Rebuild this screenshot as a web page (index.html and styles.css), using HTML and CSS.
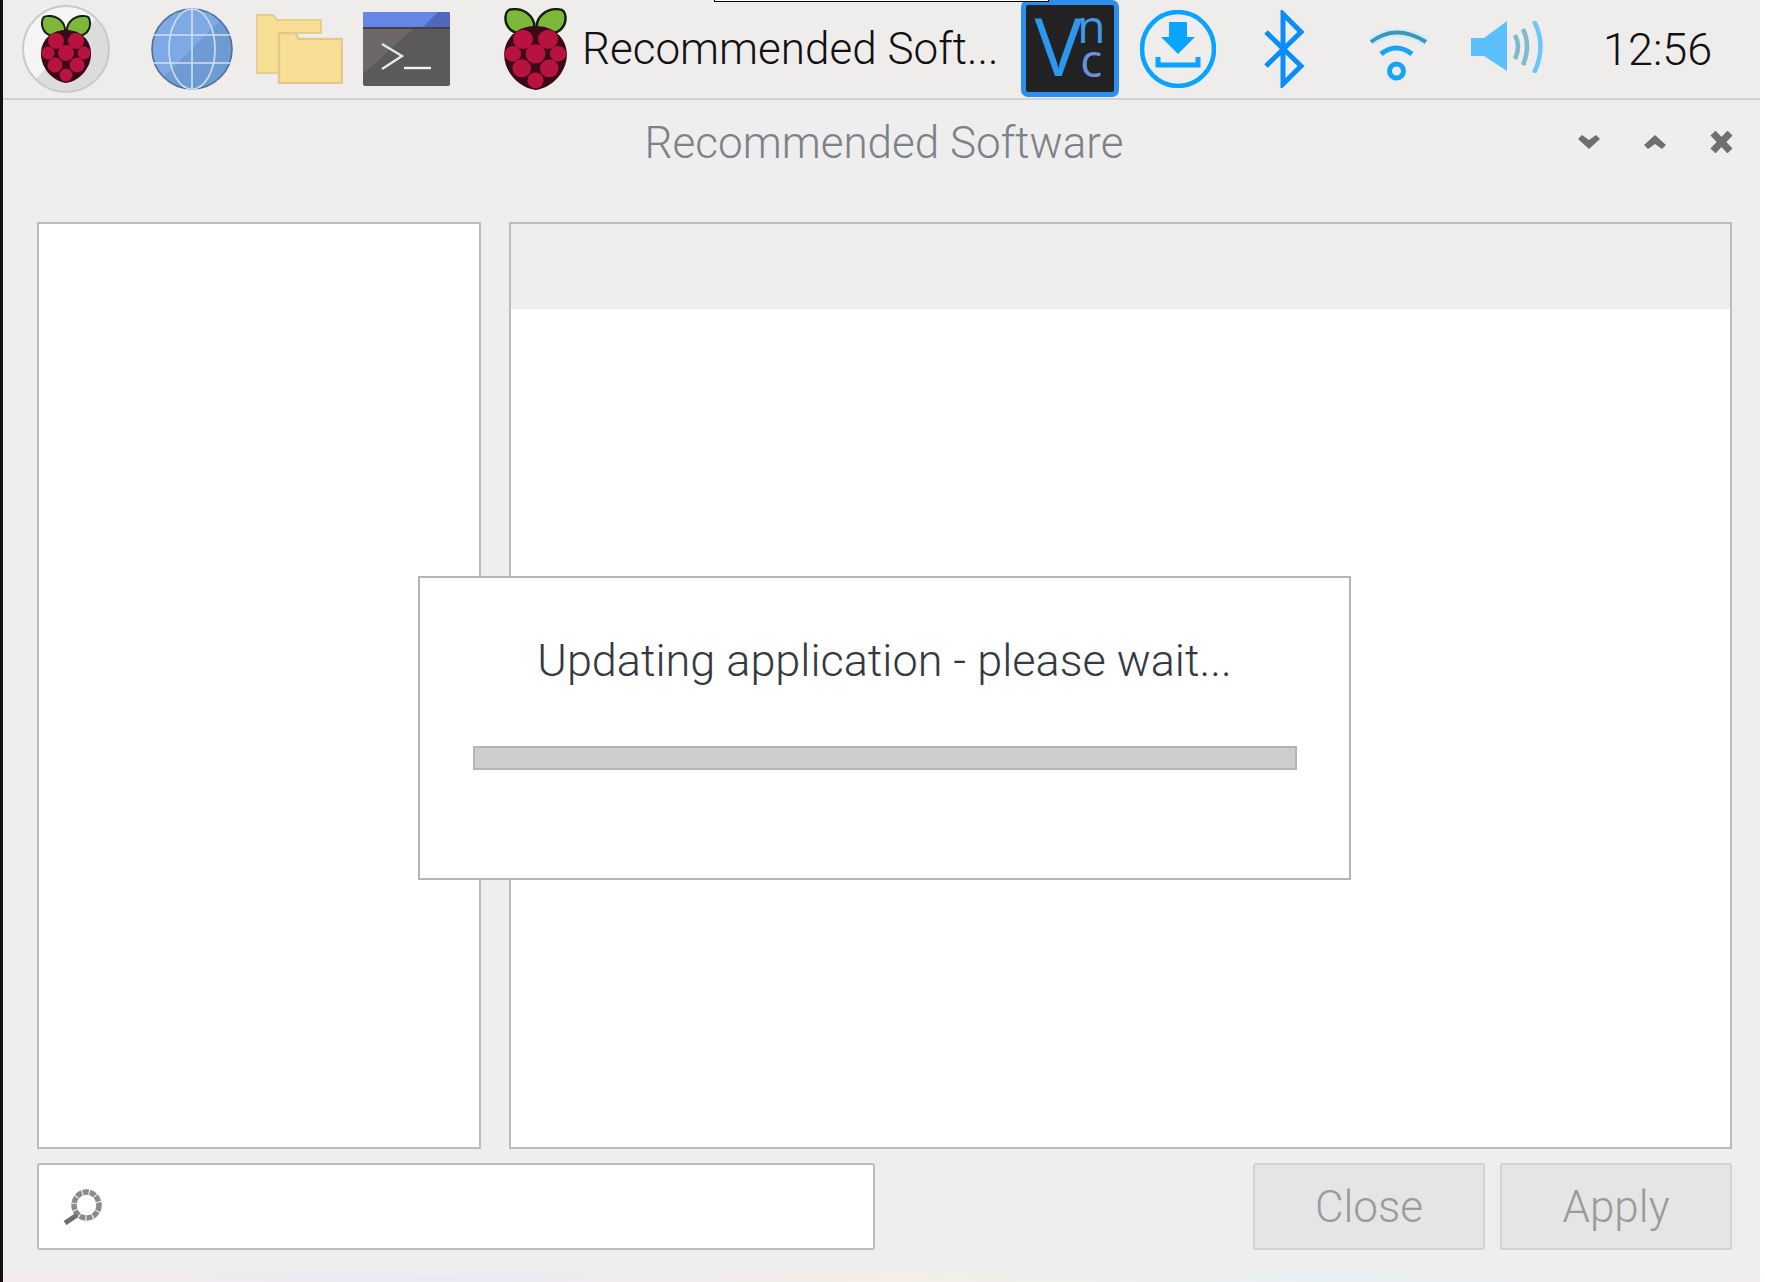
FILE: index.html
```html
<!DOCTYPE html>
<html lang="en">
<head>
  <meta charset="UTF-8">
  <title>Recommended Software</title>
  <link rel="stylesheet" href="styles.css">
</head>
<body>
<div class="screen">
  <div class="tooltip-edge"></div>

  <div class="taskbar">
    <div class="launcher menu-btn">
      <svg class="berry-small" viewBox="0 0 52 68" preserveAspectRatio="none"><use href="#berry"/></svg>
    </div>
    <svg class="launcher globe" viewBox="0 0 82 82">
      <defs>
        <linearGradient id="globeFill" x1="0" y1="0" x2="1" y2="1">
          <stop offset="0.5" stop-color="#7ea9e4"/><stop offset="0.5" stop-color="#6e9bd2"/>
        </linearGradient>
      </defs>
      <ellipse cx="41" cy="41" rx="40" ry="40" fill="url(#globeFill)" stroke="#4f6f97" stroke-width="1.6"/>
      <g fill="none" stroke="#cfe0f5" stroke-width="1.6">
        <path d="M41 1V81M2 27H80M2 55H80"/>
        <ellipse cx="41" cy="41" rx="23" ry="40"/>
      </g>
    </svg>
    <svg class="launcher folders" viewBox="0 0 87 70">
      <path d="M1 1H17L21 6H65V19H23V59H1Z" fill="#f8dd95" stroke="#e5cd90" stroke-width="2"/>
      <path d="M23 19H39L43 25H86V69H23Z" fill="#f8dd95" stroke="#e0c98c" stroke-width="2.4"/>
    </svg>
    <svg class="launcher terminal" viewBox="0 0 87 74">
      <rect width="87" height="74" rx="2" fill="#5a5a5a"/>
      <path d="M0 17H50L0 62Z" fill="#6c6868"/>
      <path d="M0 2Q0 0 2 0H85Q87 0 87 2V15H0Z" fill="#6585e8"/>
      <path d="M60 15L75 0H85Q87 0 87 2V15Z" fill="#4f68bd"/>
      <path d="M0 15H87V17H0Z" fill="#444"/>
      <path d="M19 32L39 44L19 57" fill="none" stroke="#e8e8e8" stroke-width="2.4"/>
      <path d="M41 56H68" stroke="#f2f2f2" stroke-width="2.4"/>
    </svg>

    <div class="task">
      <svg class="berry-large" viewBox="0 0 52 68" preserveAspectRatio="none"><use href="#berry"/></svg>
      <span class="task-label">Recommended Soft...</span>
    </div>

    <div class="vnc">
      <span class="vnc-v">V</span>
      <div class="vnc-rest"><span>n</span><span class="vnc-c">c</span></div>
    </div>

    <svg class="tray-download" viewBox="0 0 76 78">
      <ellipse cx="38" cy="39" rx="36" ry="37" fill="none" stroke="#08a4ff" stroke-width="4.5"/>
      <path d="M29 12H47V27H55L38 44L21 27H29Z" fill="#08a4ff"/>
      <path d="M18 47V55H58V47" fill="none" stroke="#08a4ff" stroke-width="5"/>
    </svg>
    <svg class="tray-bluetooth" viewBox="0 0 42 78">
      <path d="M3 22L38 56L20 74V4L38 22L3 56" fill="none" stroke="#0a8cff" stroke-width="5"/>
    </svg>
    <svg class="tray-wifi" viewBox="0 0 67 52">
      <path d="M8 13Q33 -6 63 13" fill="none" stroke="#cdeefc" stroke-width="9"/>
      <path d="M8 13Q33 -6 63 13" fill="none" stroke="#3e95b8" stroke-width="4"/>
      <path d="M18 25Q33 13 49 25" fill="none" stroke="#14a4f8" stroke-width="5"/>
      <circle cx="33.5" cy="42" r="7" fill="none" stroke="#14a4f8" stroke-width="5"/>
    </svg>
    <svg class="tray-volume" viewBox="0 0 73 52">
      <path d="M0 17H13L36 0V50L13 35H0Z" fill="#5cc0ff"/>
      <path d="M44 14Q50 25 44 38M52 8Q60 25 52 44" fill="none" stroke="#7fb9cf" stroke-width="4.5"/>
      <path d="M63 0Q76 25 63 52" fill="none" stroke="#6cc6fb" stroke-width="4.5"/>
    </svg>
    <span class="clock">12:56</span>
  </div>

  <div class="window">
    <div class="titlebar">
      <span class="title">Recommended Software</span>
      <div class="wm-buttons">
        <svg class="wm-chevron" viewBox="0 0 22 14"><polygon points="0,4 4,0 11,5 18,0 22,4 11,14" fill="#6f6f6f"/></svg>
        <svg class="wm-chevron" viewBox="0 0 22 14"><polygon points="0,10 4,14 11,9 18,14 22,10 11,0" fill="#6f6f6f"/></svg>
        <svg class="wm-close" viewBox="0 0 23 22"><path d="M3 2L20 20M20 2L3 20" fill="none" stroke="#6f6f6f" stroke-width="7"/></svg>
      </div>
    </div>

    <div class="panes">
      <div class="pane pane-side"></div>
      <div class="pane pane-main">
        <div class="pane-header"></div>
      </div>
    </div>

    <div class="footer">
      <div class="search">
        <svg class="search-icon" viewBox="0 0 40 36">
          <ellipse cx="23.5" cy="16" rx="12.5" ry="13" fill="none" stroke="#8a8a8a" stroke-width="5.5" stroke-dasharray="6 1"/>
          <path d="M14 26L2 34" stroke="#6d6d6d" stroke-width="5"/>
        </svg>
      </div>
      <div class="buttons">
        <div class="btn">Close</div>
        <div class="btn">Apply</div>
      </div>
    </div>
  </div>

  <div class="bottom-strip"></div>

  <div class="dialog">
    <div class="dialog-text">Updating application - please wait...</div>
    <div class="progress"></div>
  </div>
</div>

<svg class="defs" width="0" height="0">
  <symbol id="berry" viewBox="0 0 52 68" preserveAspectRatio="none">
    <path d="M25 17C26 8 18 0 7 1C1 1 0 12 6 18C12 23 22 22 25 17Z" fill="#7db83a" stroke="#14200b" stroke-width="2"/>
    <path d="M27 17C26 8 34 0 45 1C51 1 52 12 46 18C40 23 30 22 27 17Z" fill="#7db83a" stroke="#14200b" stroke-width="2"/>
    <path d="M26 15C40 15 50 24 51 37C52 52 40 66 26 68C12 66 0 52 1 37C2 24 12 15 26 15Z" fill="#3a0a18"/>
    <g fill="#b8123f">
      <circle cx="16" cy="26" r="8"/><circle cx="36" cy="26" r="8"/>
      <circle cx="26" cy="38" r="8"/><circle cx="8" cy="38" r="6.5"/><circle cx="44" cy="38" r="6.5"/>
      <circle cx="15" cy="50" r="7.5"/><circle cx="37" cy="50" r="7.5"/>
      <circle cx="26" cy="60" r="6.5"/>
    </g>
  </symbol>
</svg>
</body>
</html>
```

FILE: styles.css
```css
html, body {
  margin: 0;
  padding: 0;
  overflow: hidden;
}

body {
  background-color: #fff;
  font-family: Roboto, "Liberation Sans", sans-serif;
}

.defs {
  position: absolute;
}

.screen {
  position: relative;
  width: 1765px;
  height: 1282px;
  box-sizing: border-box;
  border-left: 3px solid #111;
  border-right: 5px solid #fff;
  display: flex;
  flex-direction: column;
  overflow: hidden;
}

/* sliver of a tooltip poking in from above */
.tooltip-edge {
  position: absolute;
  left: 711px;
  top: 0;
  width: 333px;
  height: 1px;
  background-color: #fff;
  border-bottom: 1px solid #000;
  border-left: 1px solid #000;
  border-right: 1px solid #000;
}

/* taskbar */
.taskbar {
  height: 98px;
  flex: none;
  background-color: #efecec;
  border-bottom: 2px solid #d2d2d2;
  display: flex;
  align-items: center;
}

.launcher {
  flex: none;
}

.menu-btn {
  box-sizing: border-box;
  width: 88px;
  height: 88px;
  margin-left: 19px;
  border-radius: 50%;
  border: 2px solid #c9c9c9;
  background: linear-gradient(135deg, #f5f5f5 50%, #dcdcdc 50%);
  display: flex;
  align-items: center;
  justify-content: center;
}

.berry-small {
  width: 52px;
  height: 68px;
}

.globe {
  width: 82px;
  height: 82px;
  margin-left: 41px;
}

.folders {
  width: 87px;
  height: 70px;
  margin-left: 23px;
}

.terminal {
  width: 87px;
  height: 74px;
  margin-left: 20px;
}

.task {
  display: flex;
  align-items: center;
  margin-left: 53px;
  width: 518px;
  flex: none;
}

.berry-large {
  width: 65px;
  height: 82px;
  flex: none;
}

.task-label {
  margin-left: 14px;
  font-size: 44px;
  font-weight: 300;
  color: #111;
  white-space: nowrap;
}

.vnc {
  box-sizing: border-box;
  flex: none;
  width: 98px;
  height: 97px;
  align-self: flex-start;
  background-color: #222222;
  border: 5px solid #2a8fee;
  border-radius: 7px;
  display: flex;
  justify-content: center;
  font-family: "Open Sans", sans-serif;
  color: #2d96ef;
  line-height: 1;
}

.vnc-v {
  font-size: 80px;
  font-weight: 400;
  margin-right: -5px;
}

.vnc-rest {
  display: flex;
  flex-direction: column;
  align-items: center;
  font-size: 46px;
  font-weight: 400;
  line-height: 34px;
  margin-top: 3px;
  color: #3f9bea;
}

.vnc-c {
  color: #6c8fe0;
}

.tray-download {
  width: 76px;
  height: 78px;
  margin-left: 21px;
  flex: none;
}

.tray-bluetooth {
  width: 42px;
  height: 78px;
  margin-left: 47px;
  flex: none;
}

.tray-wifi {
  width: 67px;
  height: 52px;
  margin-left: 58px;
  margin-top: 12px;
  flex: none;
}

.tray-volume {
  width: 73px;
  height: 52px;
  margin-left: 41px;
  margin-top: -4px;
  flex: none;
}

.clock {
  margin-left: 59px;
  font-size: 45px;
  font-weight: 300;
  color: #111;
}

/* app window */
.window {
  flex: 1;
  background-color: #eeeeee;
  display: flex;
  flex-direction: column;
}

.titlebar {
  height: 122px;
  flex: none;
  position: relative;
  display: flex;
  justify-content: center;
  box-sizing: border-box;
  padding-top: 17px;
}

.title {
  font-size: 44px;
  font-weight: 300;
  color: #7d8288;
  line-height: 52px;
  margin-left: 5px;
}

.wm-buttons {
  position: absolute;
  right: 27px;
  top: 31px;
  display: flex;
  align-items: center;
  gap: 44px;
}

.wm-chevron {
  width: 22px;
  height: 14px;
}

.wm-close {
  width: 23px;
  height: 22px;
}

.panes {
  height: 927px;
  flex: none;
  display: flex;
  gap: 28px;
  padding: 0 28px 0 34px;
}

.pane {
  box-sizing: border-box;
  background-color: #fff;
  border: 2px solid #bdbdb8;
}

.pane-side {
  width: 444px;
  flex: none;
}

.pane-main {
  flex: 1;
}

.pane-header {
  height: 85px;
  background-color: #eeeeee;
}

.footer {
  margin-top: 14px;
  padding: 0 28px 0 34px;
  display: flex;
  justify-content: space-between;
  height: 87px;
}

.search {
  box-sizing: border-box;
  width: 838px;
  background-color: #fff;
  border: 2px solid #bdbdb8;
  border-radius: 3px;
  display: flex;
  align-items: center;
  padding-left: 24px;
}

.search-icon {
  width: 40px;
  height: 36px;
}

.buttons {
  display: flex;
  gap: 15px;
}

.btn {
  box-sizing: border-box;
  width: 232px;
  background-color: #e5e5e5;
  border: 2px solid #d3d3d3;
  border-radius: 3px;
  font-size: 44px;
  font-weight: 300;
  color: #9b9b9b;
  display: flex;
  align-items: center;
  justify-content: center;
}

.bottom-strip {
  position: absolute;
  left: 0;
  right: 0;
  bottom: 0;
  height: 8px;
  background: linear-gradient(90deg, #f4ecec, #ece9f4 25%, #f4eee6 50%, #e9f0f4 75%, #f0ecec);
}

/* modal over the panes */
.dialog {
  position: absolute;
  left: 415px;
  top: 576px;
  box-sizing: border-box;
  width: 933px;
  height: 304px;
  background-color: #fff;
  border: 2px solid #b5b5b0;
  display: flex;
  flex-direction: column;
  align-items: center;
}

.dialog-text {
  margin-top: 58px;
  font-size: 45px;
  font-weight: 300;
  line-height: 50px;
  color: #333a42;
  white-space: nowrap;
}

.progress {
  box-sizing: border-box;
  width: 824px;
  height: 24px;
  margin-top: 60px;
  background-color: #cdcdcd;
  border: 2px solid #b5b5b0;
}
```
